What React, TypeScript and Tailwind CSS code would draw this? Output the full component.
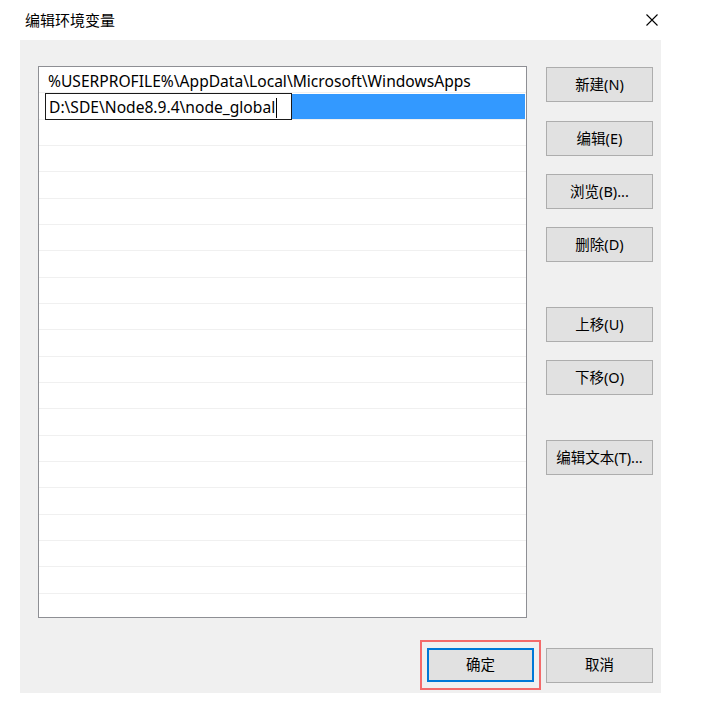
import React from 'react'

const font = { fontFamily: '"Noto Sans", "Noto Sans CJK SC", sans-serif' }

const sideButtons = [
  { label: '新建(N)', mt: 'mt-0' },
  { label: '编辑(E)', mt: 'mt-[19px]' },
  { label: '浏览(B)...', mt: 'mt-[18px]' },
  { label: '删除(D)', mt: 'mt-[18px]' },
  { label: '上移(U)', mt: 'mt-[45px]' },
  { label: '下移(O)', mt: 'mt-[18px]' },
  { label: '编辑文本(T)...', mt: 'mt-[45px]' },
]

const Button = ({ label, className = '' }: { label: string; className?: string }) => (
  <div
    className={`flex h-[35px] w-[107px] items-center justify-center border border-[#adadad] bg-[#e1e1e1] text-[14.5px] text-black ${className}`}
  >
    {label}
  </div>
)

const App = () => {
  const emptyRows = Array.from({ length: 19 })

  return (
    <div className="h-[704px] w-[708px] bg-white" style={font}>
      {/* title bar */}
      <div className="flex h-[40px] items-center justify-between pl-[25px] pr-[50px]">
        <div className="text-[15px] text-black">编辑环境变量</div>
        <svg width="12" height="12" viewBox="0 0 12 12">
          <path d="M0.5 0.5 L11.5 11.5 M11.5 0.5 L0.5 11.5" stroke="#000" strokeWidth="1.1" />
        </svg>
      </div>

      {/* dialog body */}
      <div className="ml-[20px] h-[653px] w-[641px] bg-[#f0f0f0] pl-[18px] pt-[26px]">
        <div className="flex">
          {/* list */}
          <div className="h-[552px] w-[489px] overflow-hidden border border-[#8e8f94] bg-white">
            <div className="flex h-[26.33px] items-center border-b border-[#f0f0f0] pl-[9px] pt-[5px] text-[15.6px] leading-none text-black">
              %USERPROFILE%\AppData\Local\Microsoft\WindowsApps
            </div>
            <div className="flex h-[26.33px] border-b border-[#f0f0f0] pl-[6px] pr-[1px]">
              <div className="flex h-[27px] w-[247px] items-center border border-[#1a1a1a] bg-white pl-[3px] pt-[2px] text-[15.6px] leading-none text-black">
                D:\SDE\Node8.9.4\node_global
                <span className="ml-[1px] inline-block h-[20px] w-[1px] bg-black" />
              </div>
              <div className="mt-[1px] h-[25px] flex-1 bg-[#3399ff]" />
            </div>
            {emptyRows.map((_, i) => (
              <div key={i} className="h-[26.33px] border-b border-[#f0f0f0]" />
            ))}
          </div>

          {/* side buttons */}
          <div className="ml-[19px] flex flex-col pt-[1px]">
            {sideButtons.map((b) => (
              <Button key={b.label} label={b.label} className={b.mt} />
            ))}
          </div>
        </div>

        {/* bottom buttons */}
        <div className="mt-[22px] flex items-center pl-[382px]">
          <div className="flex h-[50px] w-[121px] items-center justify-center border-2 border-[#f46a6a]">
            <div className="flex h-[34px] w-[107px] items-center justify-center border-2 border-[#0078d7] bg-[#e1e1e1] text-[14.5px] text-black">
              确定
            </div>
          </div>
          <Button label="取消" className="ml-[5px]" />
        </div>
      </div>
    </div>
  )
}

export default App
